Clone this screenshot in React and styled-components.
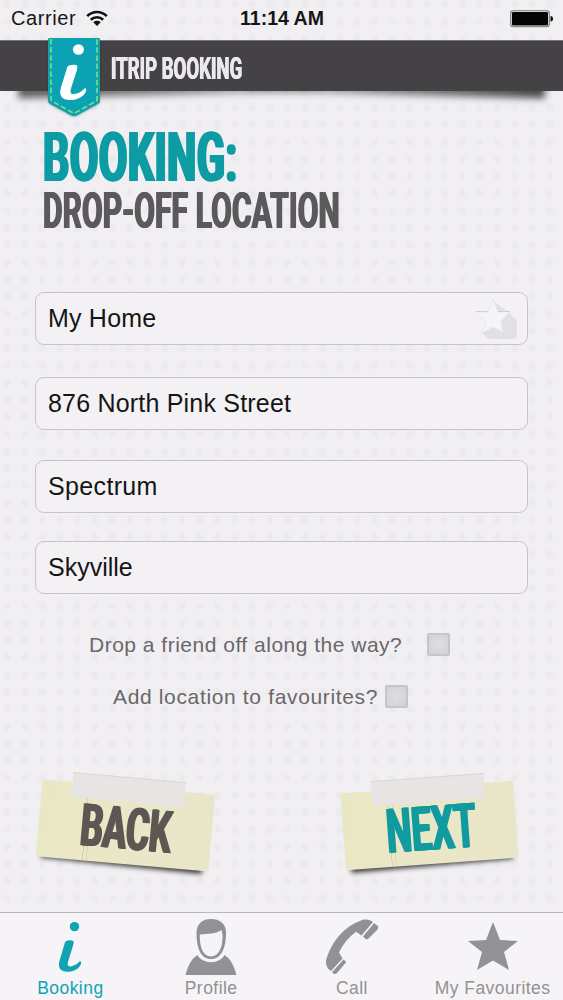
import React from 'react';
import styled, { createGlobalStyle } from 'styled-components';

const teal = '#10a3b3';
const grey = '#929194';
const helvetica = "'Liberation Sans', Arial, sans-serif";

const GlobalStyle = createGlobalStyle`
  * { box-sizing: border-box; }
  body { margin: 0; background: #f1eff2; font-family: ${helvetica}; }
`;

const Screen = styled.div`
  width: 563px;
  height: 1000px;
  display: flex;
  flex-direction: column;
  overflow: hidden;
  background-color: #f1eff2;
  background-image: radial-gradient(ellipse 5px 6px at center, #ebe9ed 30%, transparent 100%);
  background-size: 17.5px 17.2px;
  background-position: 16px 13px;
`;

const StatusBar = styled.div`
  height: 40px;
  flex: none;
  display: grid;
  grid-template-columns: 1fr auto 1fr;
  align-items: center;
  padding: 0 10px 3px 11px;
  color: #161616;
  font-size: 20px;
`;

const Carrier = styled.div`
  display: flex;
  align-items: center;
  gap: 10px;
  letter-spacing: 0.6px;
`;

const Time = styled.div`
  font-size: 19.5px;
  font-weight: bold;
`;

const BatteryIcon = styled.svg`
  justify-self: end;
`;

const Header = styled.header`
  position: relative;
  z-index: 1;
  height: 51px;
  flex: none;
  display: flex;
  padding-left: 48px;
  gap: 11px;

  &::before,
  &::after {
    content: '';
    position: absolute;
    z-index: -2;
    bottom: -4px;
    height: 14px;
    filter: blur(3.5px);
  }
  &::before {
    left: 18px;
    width: 300px;
    background: linear-gradient(90deg, rgba(0, 0, 0, 0.6), rgba(0, 0, 0, 0.45) 50%, rgba(0, 0, 0, 0.15));
    transform: rotate(-1.3deg);
  }
  &::after {
    right: 18px;
    width: 300px;
    background: linear-gradient(270deg, rgba(0, 0, 0, 0.7), rgba(0, 0, 0, 0.45) 50%, rgba(0, 0, 0, 0.15));
    transform: rotate(1.3deg);
  }
`;

const HeaderFill = styled.div`
  position: absolute;
  inset: 0;
  z-index: -1;
  background: #444245;
  border-top: 1px solid #777579;
`;

const Ribbon = styled.svg`
  flex: none;
  margin-top: -2px;
  filter: drop-shadow(0 1px 1px rgba(0, 0, 0, 0.2));
`;

const Condensed = styled.span`
  display: block;
  width: max-content;
  font-family: Roboto, 'Liberation Sans', sans-serif;
  font-weight: 700;
  white-space: nowrap;
  font-size: ${(p) => p.$size}px;
  line-height: ${(p) => p.$line}px;
  letter-spacing: ${(p) => p.$spacing || 0}px;
  color: ${(p) => p.$color};
  transform: scaleX(${(p) => p.$stretch});
  transform-origin: left center;
  text-shadow: ${(p) => `${p.$heavy}px 0 ${p.$color}, -${p.$heavy}px 0 ${p.$color}`};
`;

const Main = styled.main`
  flex: 1;
  display: flex;
  flex-direction: column;
  padding: 0 35px;
`;

const Titles = styled.div`
  padding: 38px 0 0 8px;
  height: 201px;
`;

const Fields = styled.div`
  display: flex;
  flex-direction: column;
`;

const Field = styled.div`
  height: 53px;
  margin-bottom: ${(p) => p.$after || 0}px;
  display: flex;
  align-items: center;
  justify-content: space-between;
  padding: 0 8px 0 12px;
  border: 1px solid #c6c4c8;
  border-radius: 9px;
  background: #f3f1f4;
  color: #151515;
  font-size: 25px;
  letter-spacing: ${(p) => p.$spacing ?? 0.2}px;
`;

const Checks = styled.div`
  display: flex;
  flex-direction: column;
  gap: 29px;
  padding-top: 39px;
`;

const CheckRow = styled.label`
  height: 23px;
  display: flex;
  align-items: center;
  padding-left: ${(p) => p.$indent}px;
  gap: ${(p) => p.$gap}px;
  color: #69676a;
  font-size: 21px;
  letter-spacing: ${(p) => p.$spacing}px;
`;

const Box = styled.span`
  width: 23px;
  height: 23px;
  border: 2px solid #c6c5c7;
  border-radius: 2px;
  background: radial-gradient(circle, #dfdee0, #d2d1d3);
`;

const Actions = styled.div`
  display: flex;
  justify-content: space-between;
  padding: 79px 12px 0 4px;
`;

const Note = styled.button`
  position: relative;
  width: 173px;
  height: 77px;
  border: 0;
  padding: 0;
  background: transparent;
  transform: rotate(${(p) => p.$angle}deg);

  &::before {
    content: '';
    position: absolute;
    inset: 25px 6px -2px 5px;
    background: rgba(0, 0, 0, 0.75);
    filter: blur(2.5px);
    transform: rotate(${(p) => (p.$angle > 0 ? 0.8 : -0.8)}deg);
  }
`;

const Paper = styled.span`
  position: absolute;
  inset: 0;
  background:
    linear-gradient(90deg, transparent 46px, #d6cfae 46px 47px, transparent 47px 50px, #dcd5b3 50px 51px, transparent 51px),
    linear-gradient(100deg, #eae8c4, #e8e6c8);
`;

const Tape = styled.span`
  position: absolute;
  left: ${(p) => p.$left}px;
  top: -10px;
  width: 113px;
  height: 25px;
  background: #e7e4e4;
  border-top: 1px solid #d9d6d8;
`;

const NoteText = styled.span`
  position: absolute;
  left: ${(p) => p.$x}px;
  top: ${(p) => p.$y}px;
`;

const TabBar = styled.nav`
  height: 88px;
  flex: none;
  display: grid;
  grid-template-columns: repeat(4, 1fr);
  border-top: 1px solid #b9b7bb;
  background: #f6f4f7;
`;

const Tab = styled.div`
  display: flex;
  flex-direction: column;
  align-items: center;
  color: ${(p) => (p.$active ? teal : grey)};
  font-size: 17.5px;
  letter-spacing: 0.45px;
  line-height: 22px;
  white-space: nowrap;
  svg { display: block; height: 64px; }
`;

const starPoints = '26,9 33,27 51,28 37,39 42,57 26,47.5 10,57 15,39 1,28 19,27';

function ScriptMark({ color }) {
  return (
    <g fill={color}>
      <circle cx="19" cy="4.6" r="4.7" />
      <path d="M9.5 20.2 C10.5 18.3 16 17.9 17.8 18.9 C18.5 19.6 18 22 17.4 24 L12.9 38.5 C11.5 43 12.3 44.6 15 44.4 C18.5 44 21.5 42.3 23.7 39.8 C24.8 38.8 26 39.5 25.6 41.2 C24.6 46.4 18 49.8 12 49.8 C5 49.8 2 45.8 4 38.8 Z" />
    </g>
  );
}

export default function App() {
  return (
    <>
      <GlobalStyle />
      <Screen>
        <StatusBar>
          <Carrier>
            Carrier
            <svg width="22" height="17" viewBox="0 0 22 17">
              <g fill="none" stroke="#111" strokeWidth="2.7">
                <path d="M1.2 6.1 C6.8 .6 15.2 .6 20.8 6.1" />
                <path d="M4.8 9.7 C8.3 6.4 13.7 6.4 17.2 9.7" />
              </g>
              <path fill="#111" d="M7.3 12.2 C9.5 10.3 12.5 10.3 14.7 12.2 L11 16Z" />
            </svg>
          </Carrier>
          <Time>11:14 AM</Time>
          <BatteryIcon width="43" height="18" viewBox="0 0 43 18">
            <rect x=".7" y=".7" width="38.6" height="16" rx="2.5" fill="none" stroke="#777" strokeWidth="1.1" />
            <rect x="2" y="2" width="36" height="13.4" rx="1.2" fill="#050505" />
            <path d="M40.5 6 Q43 6 43 8.8 Q43 11.5 40.5 11.5Z" fill="#111" />
          </BatteryIcon>
        </StatusBar>

        <Header>
          <HeaderFill />
          <Ribbon width="52" height="79" viewBox="0 0 52 79">
            <path d="M1 0 H51 Q52 0 52 2 V63 Q52 65 50 66 L29 77.5 Q26 79 23 77.5 L2 66 Q0 65 0 63 V2 Q0 0 1 0Z" fill="#0ba3b4" />
            <path d="M3 1 V62.5 L26 75.5 L49 62.5 V1" fill="none" stroke="#86dc78" strokeWidth="1.6" strokeDasharray="5.5 2.6" />
            <g transform="translate(8.2 6.3) scale(1.17 1.12)">
              <ScriptMark color="#fff" />
            </g>
          </Ribbon>
          <Condensed $size={31} $line={57} $color="#ebe9ec" $stretch={0.6} $heavy={0.7}>
            ITRIP BOOKING
          </Condensed>
        </Header>

        <Main>
          <Titles>
            <Condensed $size={68} $line={58} $color="#0d9ca4" $stretch={0.605} $heavy={2.2} $spacing={1}>
              BOOKING:
            </Condensed>
            <Condensed $size={50} $line={48} $color="#5b595b" $stretch={0.6} $heavy={1.2} $spacing={0.2}>
              DROP-OFF LOCATION
            </Condensed>
          </Titles>

          <Fields>
            <Field $after={32}>
              My Home
              <svg width="46" height="42" viewBox="0 0 46 42">
                <path d="M22 4 L42 20 Q44 22 44 25 V38 Q44 41 41 41 H17 Q14 41 12 38 L9 35Z" fill="#e2e0e3" />
                <path d="M20 1 L25 14 L37 14 L28 23 L30 34 L20 29 L9 35 L13 23 L3 14 L15 14Z" fill="#f6f4f7" stroke="#e7e5e8" strokeWidth=".7" />
                <path d="M3 13.5 H14.5 M25.5 13.5 H37" stroke="#cfcdd0" strokeWidth="1" />
              </svg>
            </Field>
            <Field $after={30}>876 North Pink Street</Field>
            <Field $after={28} $spacing={0.35}>Spectrum</Field>
            <Field $spacing={0}>Skyville</Field>
          </Fields>

          <Checks>
            <CheckRow $indent={54} $gap={25} $spacing={0.5}>
              Drop a friend off along the way?
              <Box />
            </CheckRow>
            <CheckRow $indent={78} $gap={7} $spacing={0.65}>
              Add location to favourites?
              <Box />
            </CheckRow>
          </Checks>

          <Actions>
            <Note $angle={5.1}>
              <Paper />
              <Tape $left={30} />
              <NoteText $x={42} $y={12}>
                <Condensed $size={59} $line={60} $color="#5d5754" $stretch={0.595} $heavy={1.8}>
                  BACK
                </Condensed>
              </NoteText>
            </Note>
            <Note $angle={-4.2}>
              <Paper />
              <Tape $left={31} />
              <NoteText $x={43} $y={12}>
                <Condensed $size={62} $line={60} $color="#119ba0" $stretch={0.575} $heavy={1.8}>
                  NEXT
                </Condensed>
              </NoteText>
            </Note>
          </Actions>
        </Main>

        <TabBar>
          <Tab $active>
            <svg width="30" viewBox="0 0 30 64">
              <g transform="translate(.5 9)">
                <ScriptMark color={teal} />
              </g>
            </svg>
            Booking
          </Tab>
          <Tab>
            <svg width="52" viewBox="0 0 52 64">
              <path fillRule="evenodd" fill={grey} d="M26 6 C36 6 42 12 41 22 C40.5 36 36 46 26 46 C16 46 12 36 11.5 22 C11 12 16 6 26 6Z M14.8 21.5 C14.5 34 18 43.5 26 43.5 C34 43.5 38 34 37.5 22 L36.5 17 C31 21 23 20.5 14.8 21.5Z" />
              <path fill={grey} d="M12.5 42 C17 51.5 35 51.5 39.5 42 C46 46 49 53 51.5 62 H.5 C3 53 6 46 12.5 42Z" />
            </svg>
            Profile
          </Tab>
          <Tab>
            <svg width="54" viewBox="0 0 54 64">
              <path fill={grey} d="M35 8 C40 5.5 45 6.5 48 9 L36.5 22.5 L31 18.8 C24 24 18 31 14 39.5 L17.5 45.5 L6 58 C1 55 0 49 2 44 C8 27 19 14 35 8Z" />
              <path d="M49.2 10 L53 13.2 Q53.8 14.5 52.5 16.5 L43 26 Q41 27.3 38 23.5Z M18.5 46.5 L21.3 49 L12 60 Q10 61.5 8.5 60.5 L7 59.2Z" fill={grey} />
            </svg>
            Call
          </Tab>
          <Tab>
            <svg width="52" viewBox="0 0 52 64">
              <polygon points={starPoints} fill={grey} />
            </svg>
            My Favourites
          </Tab>
        </TabBar>
      </Screen>
    </>
  );
}
